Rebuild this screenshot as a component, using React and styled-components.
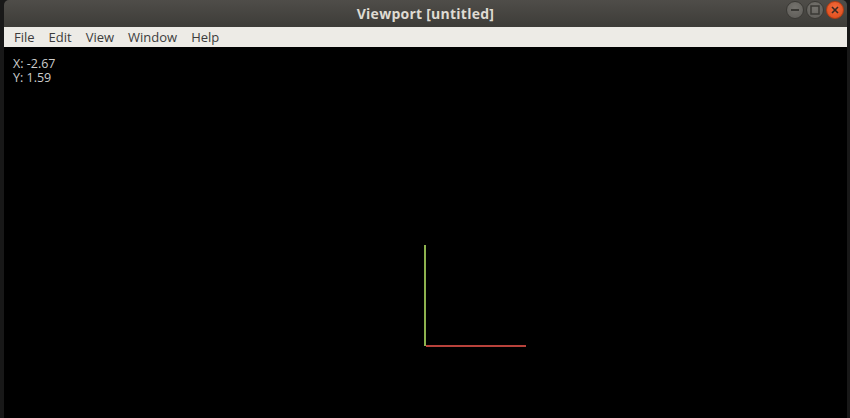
import React from 'react';
import styled, { createGlobalStyle } from 'styled-components';

const GlobalStyle = createGlobalStyle`
    html, body {
        margin: 0;
        padding: 0;
        background: #181818;
        overflow: hidden;
    }
`;

const Screen = styled.div`
    display: flex;
    width: 850px;
    height: 418px;
    background: #181818;
`;

const Window = styled.div`
    display: flex;
    flex-direction: column;
    width: 843px;
    margin-left: 4px;
    height: 418px;
`;

const TitleBar = styled.div`
    position: relative;
    height: 27px;
    flex: none;
    display: flex;
    align-items: center;
    justify-content: center;
    background: linear-gradient(#4f4d49, #3d3c38);
    border-radius: 5px 5px 0 0;
`;

const Title = styled.span`
    font-family: "Open Sans", "DejaVu Sans", sans-serif;
    font-weight: 700;
    font-size: 14px;
    color: #dfdbd2;
    letter-spacing: 0.25px;
`;

const Controls = styled.div`
    position: absolute;
    right: 3px;
    top: 1px;
    display: flex;
    gap: 2px;
`;

const CtrlButton = styled.div`
    width: 18px;
    height: 18px;
    border-radius: 50%;
    box-sizing: border-box;
    display: flex;
    align-items: center;
    justify-content: center;
    background: ${(p) => (p.close ? 'radial-gradient(circle at 50% 35%, #f26a3c, #de4a18)' : 'radial-gradient(circle at 50% 35%, #75736e, #5c5a56)')};
    border: 1px solid ${(p) => (p.close ? '#b23d14' : '#3a3935')};
`;

const MenuBar = styled.div`
    height: 20px;
    flex: none;
    display: flex;
    align-items: center;
    padding-left: 6px;
    background: #edebe6;
`;

const MenuItem = styled.span`
    font-family: "Open Sans", "DejaVu Sans", sans-serif;
    font-size: 13px;
    color: #3c3c3c;
    padding: 0 8px 0 4px;
    margin-right: 2px;
`;

const Viewport = styled.div`
    position: relative;
    flex: 1;
    background: #000;
`;

const Coords = styled.div`
    position: absolute;
    left: 9px;
    top: 10px;
    font-family: "Open Sans", "DejaVu Sans", sans-serif;
    font-size: 12.5px;
    line-height: 14px;
    color: #cdcdcd;
`;

const CoordLine = styled.div`
    height: 14px;
    white-space: nowrap;
`;

const Canvas = styled.svg`
    display: block;
    width: 843px;
    height: 371px;
`;

const menus = ['File', 'Edit', 'View', 'Window', 'Help'];

export default function App() {
    return (
        <>
            <GlobalStyle />
            <Screen>
                <Window>
                    <TitleBar>
                        <Title>Viewport [untitled]</Title>
                        <Controls>
                            <CtrlButton>
                                <svg width="10" height="10" viewBox="0 0 10 10">
                                    <rect x="1" y="4" width="8" height="2" fill="#3a3935" />
                                </svg>
                            </CtrlButton>
                            <CtrlButton>
                                <svg width="10" height="10" viewBox="0 0 10 10">
                                    <rect x="1" y="1" width="8" height="8" fill="none" stroke="#3a3935" strokeWidth="1.5" />
                                </svg>
                            </CtrlButton>
                            <CtrlButton close>
                                <svg width="10" height="10" viewBox="0 0 10 10">
                                    <path d="M2 2 L8 8 M8 2 L2 8" stroke="#3a2a22" strokeWidth="1.6" />
                                </svg>
                            </CtrlButton>
                        </Controls>
                    </TitleBar>
                    <MenuBar>
                        {menus.map((m) => (
                            <MenuItem key={m}>{m}</MenuItem>
                        ))}
                    </MenuBar>
                    <Viewport>
                        <Coords>
                            <CoordLine>X: -2.67</CoordLine>
                            <CoordLine>Y: 1.59</CoordLine>
                        </Coords>
                        <Canvas viewBox="0 0 843 371">
                            <rect x="420" y="198" width="2" height="101" fill="#8db24e" />
                            <rect x="422" y="298" width="100" height="2" fill="#b8423b" />
                        </Canvas>
                    </Viewport>
                </Window>
            </Screen>
        </>
    );
}
